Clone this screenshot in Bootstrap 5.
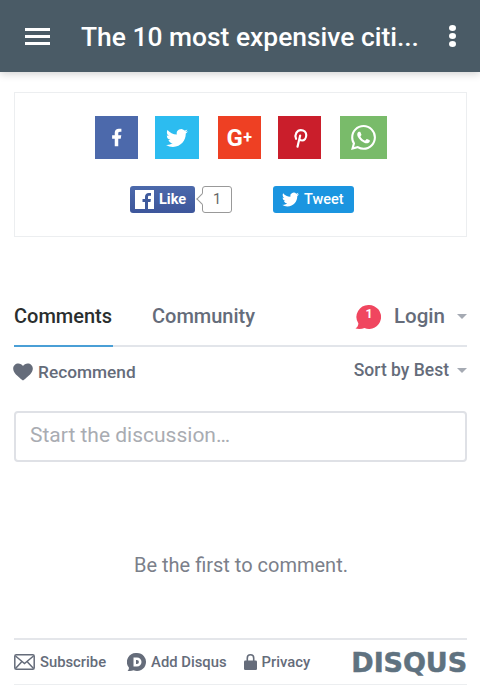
<!DOCTYPE html>
<html lang="en">
<head>
  <meta charset="UTF-8">
  <meta name="viewport" content="width=device-width,initial-scale=1">
  <title>The 10 most expensive cities</title>
  <link rel="stylesheet" href="https://cdn.jsdelivr.net/npm/bootstrap@5.3.2/dist/css/bootstrap.min.css">
  <style>
    html, body { height:689px; overflow:hidden; }
    body { background:#fff; font-family:Roboto,'Liberation Sans',sans-serif; color:#656c7a; }
    .top-bar { height:72px; background:#4a5b66; color:#fff; padding:0 24px 0 25px; box-shadow:0 2px 8px rgba(0,0,0,.18); position:relative; }
    .top-title { font-size:26.4px; font-weight:500; margin-left:31px; white-space:nowrap; flex:1; line-height:1; padding-top:2px; }
    .burger { width:25px; height:17px; display:flex; flex-direction:column; justify-content:space-between; }
    .burger span { display:block; height:3px; background:#fff; }
    .dots { width:7px; height:22px; display:flex; flex-direction:column; justify-content:space-between; }
    .dots span { display:block; width:7px; height:6px; border-radius:50%; background:#fff; }
    .page-wrap { padding:0 13px 0 14px; }
    .share-box { margin-top:20px; height:145px; border:1px solid #eceef0; border-radius:0; padding-top:23px; }
    .share-row { display:flex; justify-content:center; padding-left:1px; }
    .sq { height:43px; width:43px; display:flex; align-items:center; justify-content:center; color:#fff; margin-right:17px; }
    .sq:last-child { margin-right:0; }
    .sq-fb { background:#4c69ab; }
    .sq-tw { background:#2cbcf0; width:44px; margin-right:19px; }
    .sq-gp { background:#ee4023; font-weight:700; font-size:24px; margin-right:17px; letter-spacing:.5px; }
    .sq-gp i { font-style:normal; font-size:16px; }
    .sq-pin { background:#ca1e2b; margin-right:19px; }
    .sq-wa { background:#79bb6a; width:47px; }
    .like-row { display:flex; margin-top:27px; padding-left:115px; }
    .fb-like { width:65px; height:27px; background:linear-gradient(#4c69ab,#3d569b); border-radius:3px; color:#fff; font-weight:700; font-size:14.5px; display:flex; align-items:center; padding-left:5px; gap:5px; }
    .fb-mark { width:19px; height:19px; background:#fff; color:#3f5a9c; display:block; }
    .like-count { width:30px; height:27px; border:1px solid #999; border-radius:3px; margin-left:7px; color:#666; font-size:14.5px; display:flex; align-items:center; justify-content:center; position:relative; background:#fff; }
    .like-count::before { content:""; position:absolute; left:-5px; top:8px; width:8px; height:8px; background:#fff; border-left:1px solid #999; border-bottom:1px solid #999; transform:rotate(45deg); }
    .tw-btn { width:81px; height:27px; margin-left:41px; background:#1b95e0; border-radius:3px; color:#fff; font-weight:500; font-size:14.5px; display:flex; align-items:center; padding-left:9px; gap:5px; }
    .tab-row { margin-top:59px; height:51px; border-bottom:2px solid #e2e5ea; font-size:20px; font-weight:500; }
    .tab-on { color:#2a2e2e; height:51px; width:99px; border-bottom:2px solid #4a9fd6; margin-bottom:-2px; line-height:41px; white-space:nowrap; }
    .tab-off { margin-left:39px; line-height:41px; }
    .login-wrap { margin-left:auto; height:49px; padding-bottom:8px; font-size:20.5px; }
    .caret-down { width:0; height:0; border-left:5.5px solid transparent; border-right:5.5px solid transparent; border-top:5.5px solid #a5aab3; display:block; }
    .login-caret { margin-left:12px; }
    .red-bubble { position:relative; margin-right:13px; margin-top:-6px; width:26px; height:26px; }
    .red-bubble b { position:absolute; inset:0; padding-left:2px; color:#fff; font-size:12.5px; text-align:center; line-height:25px; }
    .tool-row { height:50px; font-size:17.3px; font-weight:500; padding-top:12px; }
    .heart-ico { margin-left:-1px; }
    .rec-txt { margin-left:5px; line-height:26px; }
    .sort-wrap { margin-left:auto; margin-top:-2px; font-size:17.5px; }
    .talk-input { height:51px; margin-top:14px; border:2px solid #dfe1e6; border-radius:4px; padding-left:14px; font-size:21px; color:#a9acb2; line-height:44px; }
    .empty-msg { text-align:center; font-size:20px; color:#7b808a; margin-top:89px; line-height:28px; padding-left:1px; }
    .foot-row { margin-top:59px; height:47px; border-top:2px solid #e4e6ea; border-bottom:1px solid #eceef0; font-size:14.8px; font-weight:500; white-space:nowrap; }
    .foot-item { gap:5px; }
    .foot-sub { margin-right:21px; }
    .foot-add { margin-right:17px; }
    .foot-logo { margin-left:auto; font-family:'DejaVu Sans',sans-serif; font-weight:700; font-size:27px; line-height:1; color:#5f7280; -webkit-text-stroke:.5px #5f7280; letter-spacing:-.1px; }
  </style>
</head>
<body>
  <header class="top-bar d-flex align-items-center">
    <div class="burger"><span></span><span></span><span></span></div>
    <div class="top-title">The 10 most expensive citi...</div>
    <div class="dots"><span></span><span></span><span></span></div>
  </header>

  <main class="page-wrap">
    <!-- share buttons -->
    <section class="share-box">
      <div class="share-row">
        <div class="sq sq-fb"><svg width="21" height="21" viewBox="0 0 24 24" fill="#fff"><path d="M14 13.500h2.800l.7-4H14v-2c0-1.030.2-2 2-2h1.600V2.140C17.300 2.100 16 2 14.700 2 11.900 2 10 3.660 10 6.700v2.800H7v4h3V22h4z"/></svg></div>
        <div class="sq sq-tw"><svg width="22" height="22" viewBox="0 0 24 24" fill="#fff"><path d="M23.953 4.57a10 10 0 01-2.825.775 4.958 4.958 0 002.163-2.723c-.951.555-2.005.959-3.127 1.184a4.92 4.92 0 00-8.384 4.482C7.69 8.095 4.067 6.13 1.64 3.162a4.822 4.822 0 00-.666 2.475c0 1.71.87 3.213 2.188 4.096a4.904 4.904 0 01-2.228-.616v.06a4.923 4.923 0 003.946 4.827 4.996 4.996 0 01-2.212.085 4.936 4.936 0 004.604 3.417 9.867 9.867 0 01-6.102 2.105c-.39 0-.779-.023-1.17-.067a13.995 13.995 0 007.557 2.209c9.053 0 13.998-7.496 13.998-13.985 0-.21 0-.42-.015-.63A9.935 9.935 0 0024 4.59z"/></svg></div>
        <div class="sq sq-gp">G<i>+</i></div>
        <div class="sq sq-pin"><svg width="20" height="22" viewBox="0 0 24 24" fill="none" stroke="#fff" stroke-width="2.600" stroke-linecap="round"><path d="M9 22.500l3.200-13.500M7.300 13C5 8 8.500 2.500 13 2.500c4 0 6.500 2.600 6.500 6 0 3.800-2.300 6.500-5 6.500-1.500 0-2.700-.8-3.200-2"/></svg></div>
        <div class="sq sq-wa"><svg width="25" height="25" viewBox="0 0 24 24" fill="#fff"><path d="M17.472 14.382c-.297-.149-1.758-.867-2.03-.967-.273-.099-.471-.148-.67.15-.197.297-.767.966-.94 1.164-.173.199-.347.223-.644.075-.297-.15-1.255-.463-2.39-1.475-.883-.788-1.48-1.761-1.653-2.059-.173-.297-.018-.458.13-.606.134-.133.298-.347.446-.52.149-.174.198-.298.298-.497.099-.198.05-.371-.025-.52-.075-.149-.669-1.612-.916-2.207-.242-.579-.487-.5-.669-.51-.173-.008-.371-.01-.57-.01-.198 0-.52.074-.792.372-.272.297-1.04 1.016-1.04 2.479 0 1.462 1.065 2.875 1.213 3.074.149.198 2.096 3.2 5.077 4.487.709.306 1.262.489 1.694.625.712.227 1.36.195 1.871.118.571-.085 1.758-.719 2.006-1.413.248-.694.248-1.289.173-1.413-.074-.124-.272-.198-.57-.347m-5.421 7.403h-.004a9.87 9.87 0 01-5.031-1.378l-.361-.214-3.741.982.998-3.648-.235-.374a9.86 9.86 0 01-1.51-5.26c.001-5.45 4.436-9.884 9.888-9.884 2.64 0 5.122 1.03 6.988 2.898a9.825 9.825 0 012.893 6.994c-.003 5.45-4.437 9.884-9.885 9.884m8.413-18.297A11.815 11.815 0 0012.05 0C5.495 0 .16 5.335.157 11.892c0 2.096.547 4.142 1.588 5.945L.057 24l6.305-1.654a11.882 11.882 0 005.683 1.448h.005c6.554 0 11.89-5.335 11.893-11.893a11.821 11.821 0 00-3.48-8.413z"/></svg></div>
      </div>
      <div class="like-row">
        <div class="fb-like"><svg class="fb-mark" viewBox="0 0 19 19"><rect width="19" height="19" fill="#fff"/><path fill="#3f5a9c" d="M13 19v-7h2.500l.4-3H13V7.200c0-.9.300-1.400 1.500-1.400H16V3.100C15.700 3 14.800 3 13.800 3 11.600 3 10 4.300 10 6.800V9H7.500v3H10v7z"/></svg>Like</div>
        <div class="like-count">1</div>
        <div class="tw-btn"><svg width="17" height="17" viewBox="0 0 24 24" fill="#fff"><path d="M23.953 4.57a10 10 0 01-2.825.775 4.958 4.958 0 002.163-2.723c-.951.555-2.005.959-3.127 1.184a4.92 4.92 0 00-8.384 4.482C7.69 8.095 4.067 6.13 1.64 3.162a4.822 4.822 0 00-.666 2.475c0 1.71.87 3.213 2.188 4.096a4.904 4.904 0 01-2.228-.616v.06a4.923 4.923 0 003.946 4.827 4.996 4.996 0 01-2.212.085 4.936 4.936 0 004.604 3.417 9.867 9.867 0 01-6.102 2.105c-.39 0-.779-.023-1.17-.067a13.995 13.995 0 007.557 2.209c9.053 0 13.998-7.496 13.998-13.985 0-.21 0-.42-.015-.63A9.935 9.935 0 0024 4.59z"/></svg>Tweet</div>
      </div>
    </section>

    <!-- comments -->
    <div class="tab-row d-flex">
      <div class="tab-on">Comments</div>
      <div class="tab-off">Community</div>
      <div class="login-wrap d-flex align-items-center">
        <div class="red-bubble">
          <svg width="26" height="26" viewBox="0 0 26 26"><path fill="#f0465f" d="M14 1a12 12 0 1 1-4.500 23.100C7 25 3.500 25.300.500 24.500 2.300 23.500 3.200 21.800 3.400 19.500A12 12 0 0 1 14 1z"/></svg>
          <b>1</b>
        </div>
        <span>Login</span>
        <span class="caret-down login-caret"></span>
      </div>
    </div>
    <div class="tool-row d-flex">
      <svg class="heart-ico mt-1" width="20" height="18" viewBox="0 0 24 22" fill="#656c7a"><path d="M12 21.500C5 16 0 12 0 6.800 0 3 2.900.5 6.300.5 8.600.5 10.800 1.700 12 3.700 13.200 1.700 15.400.5 17.700.5 21.100.5 24 3 24 6.800 24 12 19 16 12 21.500z"/></svg>
      <span class="rec-txt">Recommend</span>
      <div class="sort-wrap d-flex align-items-center align-self-start"><span class="lh-base">Sort by Best</span><span class="caret-down ms-2"></span></div>
    </div>
    <div class="talk-input">Start the discussion…</div>
    <div class="empty-msg">Be the first to comment.</div>

    <!-- footer -->
    <footer class="foot-row d-flex align-items-center">
      <div class="foot-item foot-sub d-flex align-items-center">
        <svg width="21" height="16" viewBox="0 0 21 16" fill="none" stroke="#656c7a" stroke-width="1.500"><rect x=".8" y=".8" width="19.400" height="14.400" rx="1.500"/><path d="M1.500 2l9 7.500 9-7.500M1.500 14.500l6-6.500M19.500 14.500l-6-6.500"/></svg>
        <span>Subscribe</span>
      </div>
      <div class="foot-item foot-add d-flex align-items-center">
        <svg width="19" height="20" viewBox="0 0 19 20"><path fill="#656c7a" d="M10 1a9 9 0 1 1-3.500 17.300C5 19 2.500 19.300.500 18.800 1.700 18 2 16.800 1.900 15.500A9 9 0 0 1 10 1z"/><path fill="#fff" fill-rule="evenodd" d="M6.500 5.500H10a4.500 4.500 0 0 1 0 9H6.500zM9 8v4h.9a2 2 0 0 0 0-4z"/></svg>
        <span>Add Disqus</span>
      </div>
      <div class="foot-item d-flex align-items-center">
        <svg width="13" height="16" viewBox="0 0 13 16"><path fill="none" stroke="#656c7a" stroke-width="1.600" d="M3.300 7V4a3.200 3.200 0 0 1 6.400 0v3"/><rect y="6.500" width="13" height="9.500" rx="1.300" fill="#656c7a"/></svg>
        <span>Privacy</span>
      </div>
      <div class="foot-logo">DISQUS</div>
    </footer>
  </main>
  <script src="https://cdn.jsdelivr.net/npm/bootstrap@5.3.2/dist/js/bootstrap.bundle.min.js"></script>
</body>
</html>
